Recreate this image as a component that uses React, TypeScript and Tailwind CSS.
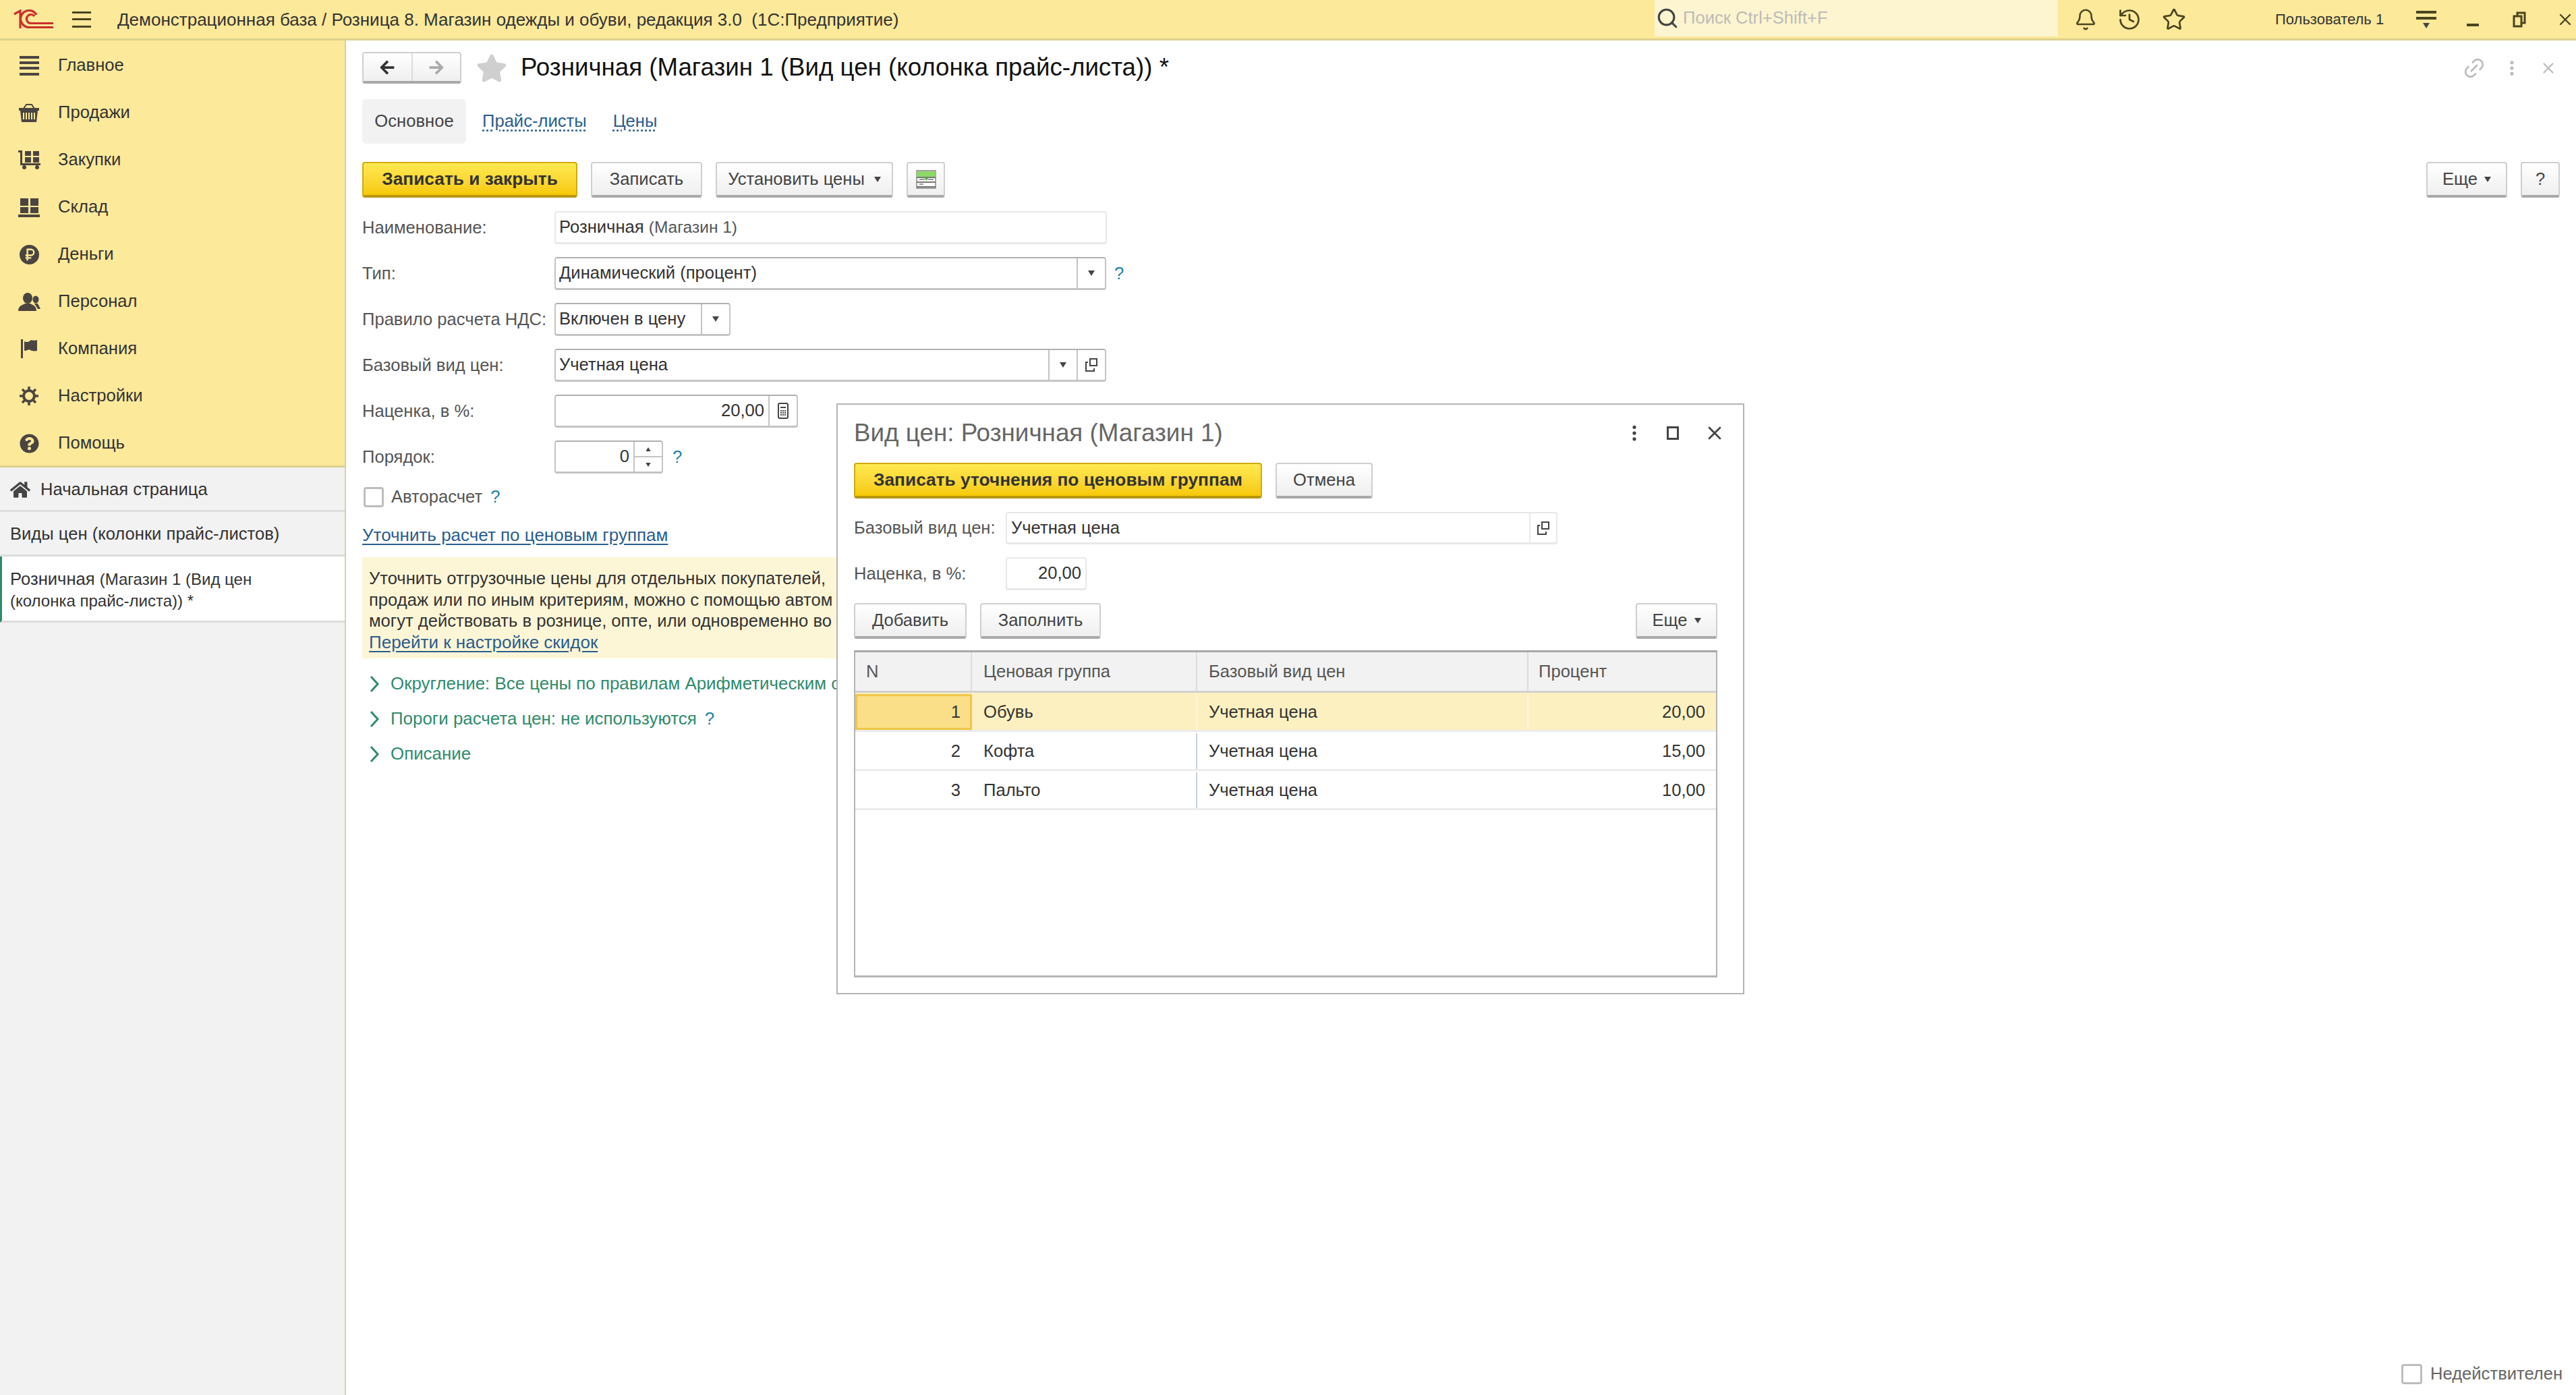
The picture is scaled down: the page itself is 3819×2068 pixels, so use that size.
import React from 'react';
import { Bell, History, Star, Search, Link2, X, EllipsisVertical } from 'lucide-react';
import { FaQuestionCircle, FaHome, FaStar, FaArrowLeft, FaArrowRight } from 'react-icons/fa';

const Caret = ({ className = '' }: { className?: string }) => (
  <svg width="10" height="8" viewBox="0 0 10 8" className={className}>
    <path d="M0 0h10L5 8z" fill="#444" />
  </svg>
);

const MainIcon = () => (
  <svg width="29" height="29" viewBox="0 0 29 29" fill="#4a4540">
    <rect y="0" width="29" height="4" />
    <rect y="8" width="29" height="4" />
    <rect y="16" width="29" height="4" />
    <rect y="25" width="29" height="4" />
  </svg>
);

const BasketIcon = () => (
  <svg width="30" height="28" viewBox="0 0 30 28">
    <path d="M7 8l4-6h8l4 6" fill="none" stroke="#4a4540" strokeWidth="2" />
    <rect y="7" width="30" height="4" fill="#4a4540" />
    <path d="M2 11h26l-2 17H4z" fill="#4a4540" />
    <rect x="6" y="14" width="18" height="10" fill="#fce99a" />
    <path d="M9 14v10M13 14v10M17 14v10M21 14v10" stroke="#4a4540" strokeWidth="2" />
  </svg>
);

const CartIcon = () => (
  <svg width="33" height="30" viewBox="0 0 33 30" fill="#4a4540">
    <path d="M0 1h6v19h27v3H3V4H0z" />
    <rect x="10" y="2" width="9" height="7" />
    <rect x="22" y="2" width="9" height="7" />
    <rect x="10" y="11" width="9" height="8" />
    <rect x="22" y="11" width="9" height="8" />
    <circle cx="9" cy="26" r="3" />
    <circle cx="28" cy="26" r="3" />
  </svg>
);

const StockIcon = () => (
  <svg width="32" height="29" viewBox="0 0 32 29" fill="#4a4540">
    <rect x="3" y="1" width="12" height="11" />
    <rect x="18" y="1" width="12" height="11" />
    <rect x="3" y="14" width="12" height="9" />
    <rect x="18" y="14" width="12" height="9" />
    <rect y="25" width="32" height="4" />
  </svg>
);

const RubleIcon = () => (
  <svg width="29" height="29" viewBox="0 0 30 30">
    <circle cx="15" cy="15" r="15" fill="#4a4540" />
    <path d="M12 24V7h5.500a4.500 4.500 0 010 9H9M9 20h9" fill="none" stroke="#fce99a" strokeWidth="2.500" />
  </svg>
);

const PeopleIcon = () => (
  <svg width="33" height="27" viewBox="0 0 33 27" fill="#4a4540">
    <ellipse cx="14" cy="8" rx="7" ry="8" />
    <path d="M0 27c0-8 7-9 10-11h8c3 2 9 3 9 11z" />
    <ellipse cx="26" cy="10" rx="4.500" ry="5.500" />
    <path d="M24 16h5l4 8h-4z" />
  </svg>
);

const FlagIcon = () => (
  <svg width="25" height="28" viewBox="0 0 25 28" fill="#4a4540">
    <rect width="3" height="28" />
    <path d="M5 3c4 2 7 1 10-2 3 1 6 1 9 0v16c-5 1-9 0-12-2-2 1-5 2-7 2z" />
  </svg>
);

const GearIcon = () => (
  <svg width="30" height="30" viewBox="0 0 30 30" fill="none" stroke="#4a4540">
    <circle cx="15" cy="15" r="8" strokeWidth="4" />
    <path d="M15 1v5M15 24v5M1 15h5M24 15h5M5 5l3.500 3.500M21.500 21.500L25 25M25 5l-3.500 3.500M8.500 21.500L5 25" strokeWidth="3.500" />
  </svg>
);

const Logo = () => (
  <svg width="60" height="30" viewBox="0 0 60 30" fill="none" stroke="#c9312b" strokeWidth="3.200">
    <path d="M1 7l9-5v26" />
    <path d="M34 8a12.500 12.500 0 10-11 18.500h36" />
    <path d="M31 10a6.500 6.500 0 10-5 10.500h33" />
  </svg>
);

const CalcIcon = () => (
  <svg width="18" height="24" viewBox="0 0 18 24" fill="none" stroke="#444" strokeWidth="2">
    <rect x="2" y="1" width="14" height="22" rx="2" />
    <path d="M5 7h8M5 12h2M8 12h2M11 12h2M5 15h2M8 15h2M11 15h2M5 18h2M8 18h2M11 18h2" />
  </svg>
);

const OpenIcon = () => (
  <svg width="20" height="22" viewBox="0 0 20 22" fill="none" stroke="#444" strokeWidth="2">
    <rect x="8" y="2" width="10" height="10" />
    <path d="M5 7H2v13h12v-4" />
  </svg>
);

const PriceIcon = () => (
  <svg width="30" height="28" viewBox="0 0 30 28">
    <rect x="1" y="1" width="28" height="26" fill="#fff" stroke="#888" strokeWidth="1.500" />
    <rect x="1" y="2" width="28" height="8" fill="#8ed868" />
    <path d="M1 11h28M1 18h28M1 25h28" stroke="#777" strokeWidth="2" />
    <path d="M5 14h8M5 21h6M18 14h8" stroke="#999" strokeWidth="2" />
    <path d="M12 11h7l-3.500 5z" fill="#5aa83e" />
  </svg>
);

const menu = [
  { label: 'Главное', icon: <MainIcon /> },
  { label: 'Продажи', icon: <BasketIcon /> },
  { label: 'Закупки', icon: <CartIcon /> },
  { label: 'Склад', icon: <StockIcon /> },
  { label: 'Деньги', icon: <RubleIcon /> },
  { label: 'Персонал', icon: <PeopleIcon /> },
  { label: 'Компания', icon: <FlagIcon /> },
  { label: 'Настройки', icon: <GearIcon /> },
  { label: 'Помощь', icon: <FaQuestionCircle size={29} color="#4a4540" /> },
];

const Btn = ({ children, className = '' }: { children: React.ReactNode; className?: string }) => (
  <div className={`flex items-center justify-center rounded-[4px] border-2 border-b-[4px] border-[#cfcfcf] border-b-[#a9a9a9] bg-gradient-to-b from-white to-[#efefef] text-[#444] ${className}`}>
    {children}
  </div>
);

const YellowBtn = ({ children, className = '' }: { children: React.ReactNode; className?: string }) => (
  <div className={`flex items-center justify-center rounded-[4px] border-2 border-b-[4px] border-[#d0ab10] border-b-[#b89610] bg-gradient-to-b from-[#ffe94f] to-[#f7c900] text-[26.300px] font-bold text-[#333] ${className}`}>
    {children}
  </div>
);

const Field = ({ children, className = '' }: { children: React.ReactNode; className?: string }) => (
  <div className={`flex h-[49px] items-center overflow-hidden rounded-[4px] border-2 border-b-[3px] border-[#c4c4c4] border-t-[#b0b0b0] bg-white text-[#333] ${className}`}>
    {children}
  </div>
);

const LightField = ({ children, className = '' }: { children: React.ReactNode; className?: string }) => (
  <div className={`flex items-center overflow-hidden rounded-[4px] border-2 border-b-[3px] border-[#e8e8e8] bg-white text-[#333] ${className}`}>
    {children}
  </div>
);

const FieldBtn = ({ children, className = '' }: { children: React.ReactNode; className?: string }) => (
  <div className={`flex h-full items-center justify-center border-l-2 border-[#c4c4c4] ${className}`}>{children}</div>
);

const Hint = () => <span className="text-[#1d7fa6]">?</span>;

const FormRow = ({ label, children }: { label: string; children: React.ReactNode }) => (
  <div className="flex h-[49px] items-center">
    <div className="w-[285px] shrink-0 text-[#555]">{label}</div>
    {children}
  </div>
);

const Group = ({ children }: { children: React.ReactNode }) => (
  <div className="flex h-[52px] items-center text-[#2f8b6c]">
    <svg width="16" height="26" viewBox="0 0 16 26" fill="none" stroke="#2f8b6c" strokeWidth="3" className="ml-[10px] mr-[16px] shrink-0">
      <path d="M3 2l10 11L3 24" />
    </svg>
    {children}
  </div>
);

const rows = [
  { n: 1, group: 'Обувь', base: 'Учетная цена', pct: '20,00' },
  { n: 2, group: 'Кофта', base: 'Учетная цена', pct: '15,00' },
  { n: 3, group: 'Пальто', base: 'Учетная цена', pct: '10,00' },
];

const PriceWindow = () => (
  <div className="absolute left-[727px] top-[538px] flex h-[876px] w-[1346px] flex-col border-2 border-[#b4b4b4] bg-white pl-[24px] pr-[38px]">
    <div className="mt-[22px] flex h-[40px] items-center justify-between">
      <div className="text-[36.800px] text-[#666]">Вид цен: Розничная (Магазин 1)</div>
      <div className="flex items-center text-[#444]">
        <EllipsisVertical size={30} strokeWidth={2.2} />
        <div className="ml-[33px] h-[20px] w-[18px] border-[3px] border-[#444]" />
        <X size={32} strokeWidth={2} className="ml-[37px] mr-[-12px]" />
      </div>
    </div>
    <div className="mt-[24px] flex h-[53px] gap-[20px]">
      <YellowBtn className="w-[605px]">Записать уточнения по ценовым группам</YellowBtn>
      <Btn className="w-[144px]">Отмена</Btn>
    </div>
    <div className="mt-[20px] flex h-[48px] items-center">
      <div className="w-[225px] shrink-0 text-[#555]">Базовый вид цен:</div>
      <LightField className="h-full w-[818px] pl-[6px]">
        <span className="flex-1">Учетная цена</span>
        <FieldBtn className="w-[40px] border-[#e8e8e8]"><OpenIcon /></FieldBtn>
      </LightField>
    </div>
    <div className="mt-[19px] flex h-[49px] items-center">
      <div className="w-[225px] shrink-0 text-[#555]">Наценка, в %:</div>
      <LightField className="h-full w-[120px] justify-end pr-[6px]">20,00</LightField>
    </div>
    <div className="mt-[19px] flex h-[53px] gap-[20px]">
      <Btn className="w-[167px]">Добавить</Btn>
      <Btn className="w-[179px]">Заполнить</Btn>
      <Btn className="ml-auto w-[121px] gap-[10px]">Еще <Caret /></Btn>
    </div>
    <div className="mt-[17px] flex h-[485px] flex-col border-2 border-b-[3px] border-[#b4b4b4] border-t-[3px] border-t-[#a8a8a8]">
      <div className="flex h-[60px] shrink-0 items-center border-b-[3px] border-[#d0d0d0] bg-[#f2f2f2] text-[#555]">
        <div className="flex h-full w-[173px] items-center border-r-2 border-[#dcdcdc] pl-[16px]">N</div>
        <div className="flex h-full w-[334px] items-center border-r-2 border-[#dcdcdc] pl-[17px]">Ценовая группа</div>
        <div className="flex h-full w-[491px] items-center border-r-2 border-[#dcdcdc] pl-[17px]">Базовый вид цен</div>
        <div className="flex h-full flex-1 items-center pl-[15px]">Процент</div>
      </div>
      {rows.map((row) => {
        const active = row.n === 1;
        return (
          <div key={row.n} className={active ? 'flex h-[58px] border-b-[3px] border-[#ececec] bg-[#fdf0c0] pt-[2px] text-[#333]' : 'flex h-[58px] border-b-[3px] border-[#ececec] pt-[2px] text-[#333]'}>
            <div className={active ? 'flex w-[173px] items-center justify-end border-[3px] border-[#efc648] bg-[#fbdf88] pr-[14px]' : 'flex w-[173px] items-center justify-end pr-[17px]'}>{row.n}</div>
            <div className={active ? 'flex w-[334px] items-center border-r-2 border-[#fff6d8] pl-[17px]' : 'flex w-[334px] items-center border-r-2 border-[#c9d2da] pl-[17px]'}>{row.group}</div>
            <div className={active ? 'flex w-[491px] items-center border-r-2 border-[#fff6d8] pl-[17px]' : 'flex w-[491px] items-center pl-[17px]'}>{row.base}</div>
            <div className="flex flex-1 items-center justify-end pr-[16px]">{row.pct}</div>
          </div>
        );
      })}
    </div>
  </div>
);

export default function App() {
  return (
    <div className="flex h-[2068px] w-[3819px] flex-col overflow-hidden bg-white font-['Liberation_Sans',Arial,sans-serif] text-[25.600px] leading-none">
      <header className="flex h-[60px] shrink-0 items-center border-b-[3px] border-[#dfd18b] bg-[#fce99a] text-[#333]">
        <div className="ml-[20px]"><Logo /></div>
        <div className="ml-[27px] flex h-[24px] w-[28px] flex-col justify-between">
          <div className="h-[3px] bg-[#4a4520]" />
          <div className="h-[3px] bg-[#4a4520]" />
          <div className="h-[3px] bg-[#4a4520]" />
        </div>
        <div className="ml-[39px] whitespace-pre text-[26px]">Демонстрационная база / Розница 8. Магазин одежды и обуви, редакция 3.0  (1С:Предприятие)</div>
        <div className="ml-auto flex h-full items-center">
          <div className="flex h-[54px] w-[598px] items-center self-start bg-[#fdf5cf]">
            <Search size={34} strokeWidth={2.2} color="#444" className="ml-[2px]" />
            <span className="ml-[6px] text-[#bbb]">Поиск Ctrl+Shift+F</span>
          </div>
          <Bell size={34} strokeWidth={1.8} color="#4a4520" className="ml-[24px]" />
          <History size={36} strokeWidth={1.8} color="#4a4520" className="ml-[30px]" />
          <Star size={36} strokeWidth={1.8} color="#4a4520" className="ml-[30px]" />
          <div className="ml-[132px] w-[160px] whitespace-nowrap text-[22px]">Пользователь 1</div>
          <div className="ml-[49px] flex w-[30px] flex-col items-center gap-[5px]">
            <div className="h-[4px] w-[30px] bg-[#4a4520]" />
            <div className="h-[4px] w-[30px] bg-[#4a4520]" />
            <Caret />
          </div>
          <div className="ml-[45px] mt-[16px] h-[4px] w-[18px] bg-[#4a4520]" />
          <svg width="20" height="24" viewBox="0 0 20 24" fill="none" stroke="#4a4520" strokeWidth="3" className="ml-[50px]">
            <rect x="2" y="7" width="11" height="15" />
            <path d="M7 7V2h11v15h-5" />
          </svg>
          <X size={28} strokeWidth={2} color="#4a4520" className="ml-[44px] mr-[2px]" />
        </div>
      </header>

      <div className="flex min-h-0 flex-1">
        <aside className="flex w-[513px] shrink-0 flex-col border-r-2 border-[#d9d29c] bg-[#f2f2f2] text-[#333]">
          <nav className="h-[633px] shrink-0 border-b-[3px] border-[#dfd18b] bg-[#fce99a] pt-[2px]">
            {menu.map((item) => (
              <div key={item.label} className="flex h-[70px] items-center">
                <div className="flex w-[86px] shrink-0 justify-center">{item.icon}</div>
                <span>{item.label}</span>
              </div>
            ))}
          </nav>
          <div className="flex h-[66px] items-center border-b-[3px] border-[#dcdcdc] pl-[15px] pt-[3px]">
            <FaHome size={30} color="#444" />
            <span className="ml-[15px]">Начальная страница</span>
          </div>
          <div className="flex h-[66px] items-center border-b-[3px] border-[#dcdcdc] pl-[15px] pt-[3px]">Виды цен (колонки прайс-листов)</div>
          <div className="flex h-[98px] flex-col justify-center border-b-[3px] border-l-[3px] border-[#dcdcdc] border-l-[#2f8b6c] bg-white pl-[12px] pt-[3px] leading-[32px]">
            <div><span>Розничная</span> <span className="text-[24px]">(Магазин 1 (Вид цен</span></div>
            <div className="text-[24px]">(колонка прайс-листа)) *</div>
          </div>
        </aside>

        <main className="relative flex min-w-0 flex-1 flex-col px-[24px] pt-[17px] pb-[16px]">
          <div className="flex h-[47px] shrink-0 items-center">
            <div className="flex h-full w-[147px] rounded-[4px] border-2 border-b-[4px] border-[#cfcfcf] border-b-[#a9a9a9] bg-gradient-to-b from-white to-[#efefef]">
              <div className="flex flex-1 items-center justify-center border-r-2 border-[#dcdcdc]"><FaArrowLeft size={24} color="#333" /></div>
              <div className="flex flex-1 items-center justify-center"><FaArrowRight size={24} color="#aaa" /></div>
            </div>
            <FaStar size={46} color="#cfcfcf" className="ml-[22px]" />
            <div className="ml-[20px] text-[36.700px] text-[#111]">Розничная (Магазин 1 (Вид цен (колонка прайс-листа)) *</div>
            <div className="ml-auto flex items-center text-[#bbb]">
              <Link2 size={36} strokeWidth={1.8} className="-rotate-45" />
              <EllipsisVertical size={28} strokeWidth={2.4} className="ml-[24px]" />
              <X size={26} strokeWidth={2} className="ml-[27px] mr-[4px]" />
            </div>
          </div>

          <div className="mt-[23px] flex h-[66px] shrink-0 items-center text-[#2a5d8f]">
            <div className="flex h-full w-[154px] items-center justify-center rounded-[6px] bg-[#f2f2f2] text-[#444]">Основное</div>
            <span className="ml-[24px] underline decoration-dotted underline-offset-4">Прайс-листы</span>
            <span className="ml-[39px] underline decoration-dotted underline-offset-4">Цены</span>
          </div>

          <div className="mt-[27px] flex h-[53px] shrink-0 gap-[20px]">
            <YellowBtn className="w-[319px]">Записать и закрыть</YellowBtn>
            <Btn className="w-[165px]">Записать</Btn>
            <Btn className="w-[263px] gap-[14px]">Установить цены <Caret /></Btn>
            <Btn className="w-[57px]"><PriceIcon /></Btn>
            <Btn className="ml-auto w-[120px] gap-[10px]">Еще <Caret /></Btn>
            <Btn className="w-[58px] text-[#222]">?</Btn>
          </div>

          <div className="mt-[20px] flex shrink-0 flex-col gap-[19px]">
            <FormRow label="Наименование:">
              <LightField className="h-full w-[819px] pl-[5px]">
                <span>Розничная</span>&nbsp;<span className="text-[24.500px] text-[#555]">(Магазин 1)</span>
              </LightField>
            </FormRow>
            <FormRow label="Тип:">
              <Field className="w-[818px] pl-[5px]">
                <span className="flex-1">Динамический (процент)</span>
                <FieldBtn className="w-[42px]"><Caret /></FieldBtn>
              </Field>
              <span className="ml-[12px]"><Hint /></span>
            </FormRow>
            <FormRow label="Правило расчета НДС:">
              <Field className="w-[261px] pl-[5px]">
                <span className="flex-1 whitespace-nowrap">Включен в цену</span>
                <FieldBtn className="w-[42px]"><Caret /></FieldBtn>
              </Field>
            </FormRow>
            <FormRow label="Базовый вид цен:">
              <Field className="w-[818px] pl-[5px]">
                <span className="flex-1">Учетная цена</span>
                <FieldBtn className="w-[42px]"><Caret /></FieldBtn>
                <FieldBtn className="w-[42px]"><OpenIcon /></FieldBtn>
              </Field>
            </FormRow>
            <FormRow label="Наценка, в %:">
              <Field className="w-[361px] justify-end">
                <span className="pr-[6px]">20,00</span>
                <FieldBtn className="w-[42px]"><CalcIcon /></FieldBtn>
              </Field>
            </FormRow>
            <FormRow label="Порядок:">
              <Field className="w-[161px] justify-end">
                <span className="pr-[6px]">0</span>
                <div className="flex h-full w-[42px] flex-col border-l-2 border-[#c4c4c4]">
                  <div className="flex flex-1 items-center justify-center border-b-2 border-[#c4c4c4]"><Caret className="rotate-180 scale-75" /></div>
                  <div className="flex flex-1 items-center justify-center"><Caret className="scale-75" /></div>
                </div>
              </Field>
              <span className="ml-[14px]"><Hint /></span>
            </FormRow>
          </div>

          <div className="mt-[20px] flex h-[30px] shrink-0 items-center text-[#555]">
            <div className="ml-[2px] h-[30px] w-[30px] rounded-[4px] border-[3px] border-[#bdbdbd] bg-white" />
            <span className="ml-[11px]">Авторасчет</span>
            <span className="ml-[12px]"><Hint /></span>
          </div>

          <div className="mt-[25px] flex h-[31px] shrink-0 items-center text-[26px] text-[#2a5d8f] underline underline-offset-4">Уточнить расчет по ценовым группам</div>

          <div className="mt-[18px] h-[150px] w-[703px] shrink-0 overflow-hidden whitespace-nowrap bg-[#fdf6d6] pl-[10px] pt-[16px] leading-[31.500px] text-[#333]">
            <div>Уточнить отгрузочные цены для отдельных покупателей,</div>
            <div>продаж или по иным критериям, можно с помощью автом</div>
            <div>могут действовать в рознице, опте, или одновременно во</div>
            <div className="text-[26px] text-[#2a5d8f] underline underline-offset-4">Перейти к настройке скидок</div>
          </div>

          <div className="mt-[12px] flex w-[703px] shrink-0 flex-col overflow-hidden whitespace-nowrap text-[25.900px]">
            <Group>Округление: Все цены по правилам Арифметическим с</Group>
            <Group>Пороги расчета цен: не используются<span className="ml-[12px]"><Hint /></span></Group>
            <Group>Описание</Group>
          </div>

          <div className="mt-auto flex h-[30px] shrink-0 items-center justify-end text-[#666]">
            <div className="h-[30px] w-[31px] rounded-[4px] border-[3px] border-[#bdbdbd] bg-white" />
            <span className="ml-[12px] w-[192px] whitespace-nowrap">Недействителен</span>
          </div>

          <PriceWindow />
        </main>
      </div>
    </div>
  );
}
